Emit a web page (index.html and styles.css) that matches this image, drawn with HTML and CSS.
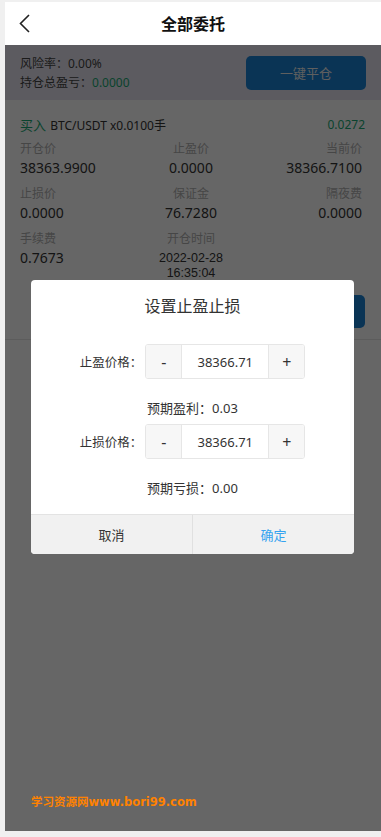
FILE: index.html
```html
<!DOCTYPE html>
<html lang="zh-CN">
<head>
<meta charset="utf-8">
<title>全部委托</title>
<link rel="stylesheet" href="styles.css">
</head>
<body>
<div class="app">
  <header class="nav">
    <svg class="back" width="12" height="20" viewBox="0 0 12 20"><polyline points="10,1 1.5,9.5 10,18" fill="none" stroke="#222" stroke-width="1.6"/></svg>
    <h1 class="nav-title">全部委托</h1>
  </header>

  <section class="summary">
    <div class="stats">
      <p>风险率：0.00%</p>
      <p>持仓总盈亏：<span class="up">0.0000</span></p>
    </div>
    <button class="close-all">一键平仓</button>
  </section>

  <section class="order">
    <div class="order-head">
      <div><span class="side">买入</span> <span class="sym">BTC/USDT x0.0100手</span></div>
      <span class="pnl">0.0272</span>
    </div>
    <div class="grid">
      <div class="cell"><span class="lbl">开仓价</span><span class="val">38363.9900</span></div>
      <div class="cell mid"><span class="lbl">止盈价</span><span class="val">0.0000</span></div>
      <div class="cell end"><span class="lbl">当前价</span><span class="val">38366.7100</span></div>
      <div class="cell"><span class="lbl">止损价</span><span class="val">0.0000</span></div>
      <div class="cell mid"><span class="lbl">保证金</span><span class="val">76.7280</span></div>
      <div class="cell end"><span class="lbl">隔夜费</span><span class="val">0.0000</span></div>
      <div class="cell"><span class="lbl">手续费</span><span class="val">0.7673</span></div>
      <div class="cell mid"><span class="lbl">开仓时间</span><span class="val date">2022-02-28<br>16:35:04</span></div>
      <div class="cell end"></div>
    </div>
    <div class="actions">
      <button class="act wide"></button>
      <button class="act"></button>
    </div>
  </section>

  <div class="mask"></div>

  <div class="dialog">
    <h2 class="dlg-title">设置止盈止损</h2>
    <div class="row first">
      <span class="row-lbl">止盈价格：</span>
      <div class="stepper"><span class="step">-</span><span class="num">38366.71</span><span class="step">+</span></div>
    </div>
    <p class="hint">预期盈利：0.03</p>
    <div class="row">
      <span class="row-lbl">止损价格：</span>
      <div class="stepper"><span class="step">-</span><span class="num">38366.71</span><span class="step">+</span></div>
    </div>
    <p class="hint">预期亏损：0.00</p>
    <div class="dlg-foot">
      <button class="foot-btn">取消</button>
      <button class="foot-btn ok">确定</button>
    </div>
  </div>

  <div class="watermark">学习资源网www.bori99.com</div>
</div>
</body>
</html>
```
FILE: styles.css
```css
* { box-sizing: border-box; margin: 0; padding: 0; }
html, body { height: 100%; }
body {
  background: #f0f0f0;
  padding: 2px 0 6px 5px;
  font-family: "Noto Sans", "Noto Sans CJK SC", sans-serif;
  color: #333;
}
.app {
  position: relative;
  width: 376px;
  height: 829px;
  background: #fff;
  overflow: hidden;
}
.nav {
  position: relative;
  z-index: 3;
  height: 43px;
  background: #fff;
  display: flex;
  align-items: center;
  justify-content: center;
}
.back { position: absolute; left: 14px; top: 12px; }
.nav-title { font-size: 16px; font-weight: bold; color: #111; line-height: 20px; }

.summary {
  height: 55px;
  background: #e6e4f0;
  display: flex;
  align-items: center;
  justify-content: space-between;
  padding: 0 15px;
}
.stats p { font-size: 12px; line-height: 19px; color: #444; }
.up { color: #1aa873; }
.close-all {
  width: 120px; height: 34px;
  border: none; border-radius: 5px;
  background: #1982d4; color: #eee;
  font-family: inherit; font-size: 13px;
}

.order { border-bottom: 1px solid #e5e5e5; padding: 14px 16px 11px 15px; }
.order-head { display: flex; justify-content: space-between; align-items: center; height: 20px; }
.side { color: #1aa873; font-size: 13px; }
.sym { color: #333; font-size: 12px; }
.pnl { color: #1aa873; font-size: 12px; }
.grid {
  margin-top: 6px;
  padding-right: 3px;
  display: grid;
  grid-template-columns: 1fr 1fr 1fr;
  row-gap: 7px;
}
.cell { display: flex; flex-direction: column; align-items: flex-start; }
.cell.mid { align-items: center; }
.cell.end { align-items: flex-end; }
.lbl { font-size: 12px; line-height: 18px; color: #b0b0b0; }
.val { font-size: 14px; line-height: 20px; color: #333; }
.val.date {
  font-family: "Liberation Sans", sans-serif;
  font-size: 12.5px; line-height: 14.5px; padding-top: 3px; text-align: center;
}
.actions { margin-top: 15px; display: flex; justify-content: flex-end; gap: 10px; }
.act {
  height: 33px; width: 60px;
  border: none; border-radius: 5px;
  background: #1982d4;
}
.act.wide { width: 100px; }

.mask {
  position: absolute; left: 0; right: 0; top: 43px; bottom: 0;
  background: rgba(0,0,0,0.6);
  z-index: 2;
}

.dialog {
  position: absolute; z-index: 4;
  left: 26px; top: 278px;
  width: 323px; height: 274px;
  background: #fff;
  border-radius: 4px;
  overflow: hidden;
  display: flex; flex-direction: column; align-items: center;
}
.dlg-title { margin-top: 16px; font-size: 16px; font-weight: normal; line-height: 20px; color: #333; }
.row { display: flex; align-items: center; gap: 3px; margin-top: 6px; }
.row.first { margin-top: 28px; }
.row-lbl { font-size: 12.5px; color: #333; }
.stepper {
  display: flex; height: 35px; width: 160px;
  border: 1px solid #e6e6e6; border-radius: 3px; overflow: hidden;
}
.step {
  width: 35px; background: #f7f7f7;
  display: flex; align-items: center; justify-content: center;
  font-size: 16px; color: #333;
}
.num {
  flex: 1; border-left: 1px solid #e6e6e6; border-right: 1px solid #e6e6e6;
  display: flex; align-items: center; justify-content: center;
  font-size: 13px; color: #333;
}
.hint { margin-top: 19px; font-size: 13px; line-height: 20px; color: #333; }
.dlg-foot {
  margin-top: auto; width: 100%; height: 40px;
  display: flex; border-top: 1px solid #e3e3e3; background: #f1f1f1;
}
.foot-btn {
  flex: 1; border: none; background: transparent;
  font-family: inherit; font-size: 13px; color: #333;
}
.foot-btn.ok { color: #35a3f0; border-left: 1px solid #e0e0e0; }

.watermark {
  position: absolute; z-index: 5;
  left: 26px; top: 792px;
  font-family: "DejaVu Sans", "Noto Sans CJK SC", sans-serif;
  font-weight: bold; font-size: 11.5px; line-height: 16px;
  color: #ff8200;
}
```
